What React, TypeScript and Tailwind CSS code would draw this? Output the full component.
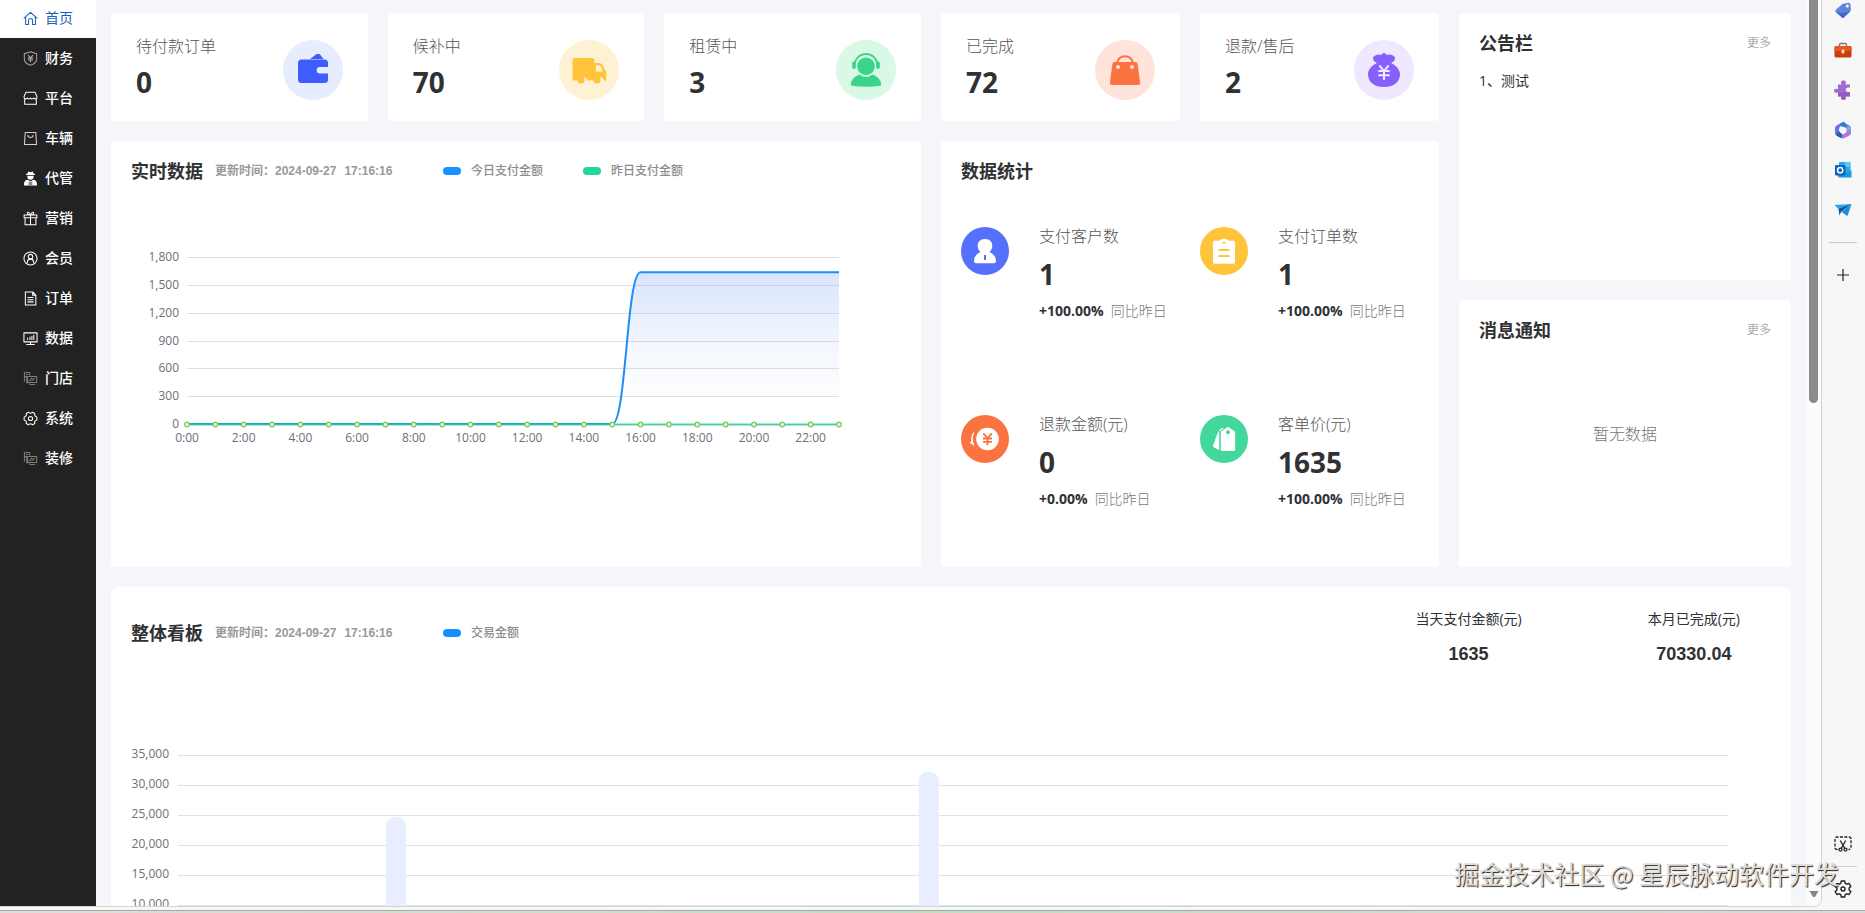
import { ReactElement, ReactNode } from "react";

const stroke = {
  fill: "none",
  stroke: "currentColor",
  strokeWidth: 1.1,
  strokeLinecap: "round" as const,
  strokeLinejoin: "round" as const,
};

/* Menu icons, all on a 16 x 16 grid */
const menuIcons: Record<string, ReactNode> = {
  home: <path d="M1.2 7.6 8 1.4l6.8 6.2M2.8 6.4v8.1h3.1V10a2.1 2.1 0 0 1 4.2 0v4.5h3.1V6.4" />,
  shield: <path d="M8 .9 14.6 3v5.2c0 3.3-2.6 5.6-6.6 7-4-1.4-6.6-3.7-6.6-7V3ZM5.6 4.6 8 7.4l2.4-2.8M8 7.4v4.4M5.6 7.6h4.8M5.6 9.6h4.8" />,
  shop: <path d="M3.200 1.300h9.600l2 4.200v1.600c-.4 1.600-2.600 1.700-3.400.4-.8 1.300-2.700 1.300-3.400 0-.8 1.300-2.700 1.300-3.400 0C3.800 8.800 1.600 8.700 1.200 7.100V5.500ZM1.800 8.400v5.800h12.400V8.400" />,
  bag: <path d="M2.4 1.500h11.200l.9 13H1.500ZM5.200 4.500c.3 3.200 5.300 3.200 5.600 0" />,
  gift: <path d="M1.200 4.300h13.600v3H1.200ZM2.200 7.300h11.600v7.400H2.200ZM8 4.300v10.400M8 4.300C6.500 4.300 4.300 3.500 4.600 2S7.200 1.300 8 4.300c.8-3 3.100-3.800 3.400-2.300S9.500 4.300 8 4.300" />,
  user: (
    <>
      <circle cx="8" cy="8" r="7" />
      <circle cx="8" cy="6" r="2.4" />
      <path d="M4.500 12.800c.2-5.500 6.800-5.500 7 0" />
    </>
  ),
  order: <path d="M2.500 1h7.800l3.400 3.400V15H2.500ZM10.300 1v3.400h3.400M5.200 7h5.600M5.200 9.300h5.600M5.200 11.600h5.600" />,
  data: <path d="M1 2h14v9.600H1ZM4 14.300h8M8 11.600v2.700M5 9V7.600M7.500 9V6.400M9.500 9V5.500M11.500 9V4.600" />,
  store: <path d="M1.500 10.800V1.500h5.800v3M3.300 3.700h2M1.500 6h2.500v6.400h3M4.800 5.800h9.800v6.400H4.800ZM7.300 14.300h5M6.500 10.500l3-3M9.300 10.600l3-3" />,
  gear: (
    <>
      <path d="M5.800 1.300 8 2.500l2.200-1.200 2.300 1.300.1 2.500 2.200 1.400v3l-2.200 1.400-.1 2.500-2.300 1.300L8 13.500l-2.200 1.200-2.300-1.300-.1-2.500-2.200-1.400v-3l2.200-1.400.1-2.500Z" />
      <circle cx="8" cy="8" r="2.2" />
    </>
  ),
  agent: (
    <g fill="currentColor" stroke="none">
      <path d="M4.800 2.600 5.600.5 8 1.200 10.400.5l.8 2.100 1.600.6v1H3.200v-1Z" />
      <path d="M4.700 5h6.600v1.200a3.300 3.200 0 0 1-6.600 0Z" />
      <path d="M1 15.500c0-4 1-5.600 3.800-6.100L8 10.800l3.200-1.400c2.800.5 3.800 2.100 3.800 6.100Z" />
      <path d="M6 11.300h4v4.200H6Z" fill="#8a8a8a" />
    </g>
  ),
};

const menu = [
  { label: "财务", icon: "shield", tone: "text-[#a8a8a8]" },
  { label: "平台", icon: "shop", tone: "text-white" },
  { label: "车辆", icon: "bag", tone: "text-[#d0d0d0]" },
  { label: "代管", icon: "agent", tone: "text-white" },
  { label: "营销", icon: "gift", tone: "text-white" },
  { label: "会员", icon: "user", tone: "text-white" },
  { label: "订单", icon: "order", tone: "text-white" },
  { label: "数据", icon: "data", tone: "text-white" },
  { label: "门店", icon: "store", tone: "text-[#7d7d7d]" },
  { label: "系统", icon: "gear", tone: "text-white" },
  { label: "装修", icon: "store", tone: "text-[#7d7d7d]" },
];

function MenuIcon({ name, tone }: { name: string; tone: string }): ReactElement {
  return (
    <svg viewBox="0 0 16 16" className={`size-[15px] ${tone}`} {...stroke}>
      {menuIcons[name]}
    </svg>
  );
}

function SideMenu(): ReactElement {
  return (
    <nav className="w-24 shrink-0 bg-[#222222] text-sm text-white">
      <a href="#home" className="flex h-[38px] items-center gap-[7px] bg-white pb-0.5 pl-[23px] text-[#1a5fc0]">
        <MenuIcon name="home" tone="text-[#1a5fc0]" />
        首页
      </a>
      {menu.map((item) => (
        <a key={item.label} href="#menu" className="flex h-10 items-center gap-[7px] pl-[23px] font-medium">
          <MenuIcon name={item.icon} tone={item.tone} />
          {item.label}
        </a>
      ))}
    </nav>
  );
}

/* Round order icons, 60 x 60 */
const walletIcon = (
  <svg viewBox="0 0 60 60" className="size-[60px]">
    <circle cx="30" cy="30" r="30" fill="#e6edff" />
    <path d="M27 19l6-4.500q2-1.300 4 0L40.500 19Z" fill="#3f5dfd" />
    <path d="M18.500 19.500h23a3.500 3.500 0 0 1 3.500 3.500v4h-8a3.300 3.300 0 0 0 0 6.600h8v6a3.500 3.500 0 0 1-3.500 3.500h-23a3.500 3.500 0 0 1-3.500-3.500V23a3.500 3.500 0 0 1 3.500-3.500Z" fill="#3f5dfd" />
  </svg>
);
const truckIcon = (
  <svg viewBox="0 0 60 60" className="size-[60px]">
    <circle cx="30" cy="30" r="30" fill="#fff1d3" />
    <path d="M16 18h17a2.500 2.500 0 0 1 2.500 2.500V23h4.800q2 0 3 1.700l3.200 6.300.8.8v8q0 .7-.7.700h-1.500a5 5 0 0 0-9.500 0h-6.800a5 5 0 0 0-9.600 0H14.500q-1 0-1-1V20.500A2.500 2.500 0 0 1 16 18Z" fill="#ffc43a" />
    <path d="M36.800 25.300h3.200q1 0 1.500 1l2.500 5.200h-7.200Z" fill="#fff1d3" />
    <circle cx="22" cy="40" r="3.600" fill="#ffc43a" />
    <circle cx="38" cy="40" r="3.600" fill="#ffc43a" />
  </svg>
);
const serviceIcon = (
  <svg viewBox="0 0 60 60" className="size-[60px]">
    <circle cx="30" cy="30" r="30" fill="#d9f8e6" />
    <path d="M18.500 25.500a11.500 11.500 0 0 1 23 0" fill="none" stroke="#39d588" strokeWidth="1.800" />
    <rect x="16.200" y="21.500" width="3.600" height="7.500" rx="1.800" fill="#39d588" />
    <rect x="40.200" y="21.500" width="3.600" height="7.500" rx="1.800" fill="#39d588" />
    <circle cx="30" cy="26.300" r="8.800" fill="#39d588" />
    <path d="M23.500 34.500q6.500 5 13 0c5 2 8.500 5.500 8.700 10q0 1-1.200 1.300-14 2-28 0-1.200-.3-1.200-1.300c.2-4.500 3.700-8 8.700-10Z" fill="#39d588" />
  </svg>
);
const bagIcon = (
  <svg viewBox="0 0 60 60" className="size-[60px]">
    <circle cx="30" cy="30" r="30" fill="#ffe4db" />
    <path d="M22 24c.5-10.500 15.500-10.500 16 0" fill="none" stroke="#fb7340" strokeWidth="2" />
    <path d="M19.500 22h21q1.800 0 2.100 1.800l2.500 19q.2 2.200-1.900 2.200H16.800q-2.100 0-1.900-2.200l2.500-19q.3-1.800 2.100-1.800Z" fill="#fb7340" />
    <circle cx="23" cy="27" r="2" fill="#ffe4db" />
    <circle cx="37" cy="27" r="2" fill="#ffe4db" />
  </svg>
);
const moneyIcon = (
  <svg viewBox="0 0 60 60" className="size-[60px]">
    <circle cx="30" cy="30" r="30" fill="#efe8ff" />
    <path d="M22.500 15q2.800-1 4.500 0 3-3.800 6 0 2-1 4.700 0 3.600 1 3.300 4-.3 2.400-2.700 3l-1 1.300C43 26 46 30 46 34.500 46 42.500 39 47 30 47s-16-4.500-16-12.500c0-4.500 3-8.500 8.700-11.200l-1-1.300q-2.400-.6-2.700-3-.3-3 3.500-4Z" fill="#8660fb" />
    <path d="m25.300 25.500 4.700 5.300 4.700-5.300M30 30.800V40M24.300 31h11.400M24.300 35.300h11.400" fill="none" stroke="#efe8ff" strokeWidth="2" />
  </svg>
);

function OrderCard({ label, value, icon }: { label: string; value: string; icon: ReactNode }): ReactElement {
  return (
    <section className="flex h-[108px] min-w-0 flex-1 items-center justify-between rounded-sm bg-white px-[25px] pt-1.5">
      <div className="pb-1.5">
        <p className="text-base leading-6 font-light text-[#555]">{label}</p>
        <p className="mt-1.5 text-[28px] leading-9 font-bold text-[#303133]">{value}</p>
      </div>
      {icon}
    </section>
  );
}

function PanelTitle({ children }: { children: ReactNode }): ReactElement {
  return <h2 className="text-lg leading-5 font-bold text-[#303133]">{children}</h2>;
}

function UpdateTime(): ReactElement {
  return (
    <p className="ml-3 w-[228px] font-['Liberation_Sans','Noto_Sans_CJK_SC',sans-serif] text-xs leading-5 font-bold text-[#999]">
      更新时间：2024-09-27<span className="ml-2">17:16:16</span>
    </p>
  );
}

function Legend({ color, label }: { color: string; label: string }): ReactElement {
  return (
    <span className="mr-10 flex items-center gap-2.5 text-xs leading-5 font-medium text-[#8c8c8c]">
      <i className={`h-2 w-[18px] rounded-full ${color}`} />
      {label}
    </span>
  );
}

function RealtimeChart(): ReactElement {
  const left = 56;
  const right = 708;
  const bottom = 223;
  const step = (right - left) / 23;
  const ticks = [0, 300, 600, 900, 1200, 1500, 1800];
  const hours = Array.from({ length: 24 }, (_, i) => i);
  const y = (v: number) => bottom - (v / 1800) * 167;
  const rise = left + step * 15;
  const top = y(1635);
  const line = `M${left} ${bottom}H${rise}C${rise + step / 2} ${bottom} ${rise + step / 2} ${top} ${rise + step} ${top}H${right}`;
  return (
    <svg viewBox="0 0 770 260" className="mt-5 w-full" fontSize="12" fill="#6e7079">
      <defs>
        <linearGradient id="pay" x1="0" y1="0" x2="0" y2="1">
          <stop offset="0" stopColor="#d9e5fd" />
          <stop offset="0.5" stopColor="#f4f7fe" />
          <stop offset="0.85" stopColor="#ffffff" />
        </linearGradient>
      </defs>
      <path d={`${line}V${bottom}Z`} fill="url(#pay)" />
      {ticks.map((v) => (
        <g key={v}>
          <line x1={left} x2={right} y1={Math.round(y(v)) + 0.5} y2={Math.round(y(v)) + 0.5} stroke="#a9b0bc" strokeOpacity="0.4" />
          <text x={left - 8} y={y(v) + 4} textAnchor="end">
            {v.toLocaleString("en-US")}
          </text>
        </g>
      ))}
      <path d={line} fill="none" stroke="#1e8ef5" strokeWidth="2" />
      <path d={`M${left} ${bottom + 0.5}H${right}`} stroke="#22cf8c" strokeOpacity="0.8" strokeWidth="2" />
      {hours.map((h) => (
        <circle key={h} cx={left + step * h} cy={bottom + 0.5} r="2.2" fill="#fff" stroke="#7fc95f" strokeWidth="1.4" />
      ))}
      {hours
        .filter((h) => h % 2 === 0)
        .map((h) => (
          <text key={h} x={left + step * h} y={241} textAnchor="middle">
            {h}:00
          </text>
        ))}
    </svg>
  );
}

function BoardChart(): ReactElement {
  const left = 47;
  const right = 1597;
  const bottom = 263;
  const slot = (right - left) / 32;
  const ticks = [0, 5000, 10000, 15000, 20000, 25000, 30000, 35000];
  const bars = [
    { day: 4, amount: 24700 },
    { day: 15, amount: 32200 },
  ];
  return (
    <svg viewBox="0 0 1640 300" className="mt-9 w-full" fontSize="12" fill="#6e7079">
      {ticks.map((v) => (
        <g key={v}>
          <line x1={left} x2={right} y1={bottom - v * 0.006 + 0.5} y2={bottom - v * 0.006 + 0.5} stroke="#e0e2e6" />
          <text x={left - 9} y={bottom - v * 0.006 + 3} textAnchor="end">
            {v.toLocaleString("en-US")}
          </text>
        </g>
      ))}
      {bars.map((b) => (
        <rect key={b.day} x={left + slot * (b.day + 0.5) - 10} y={bottom - b.amount * 0.006} width="20" height={b.amount * 0.006} rx="9" fill="#e8eeff" />
      ))}
    </svg>
  );
}

/* Round statistic icons, 48 x 48 */
const customerIcon = (
  <svg viewBox="0 0 48 48" className="size-12 shrink-0">
    <circle cx="24" cy="24" r="24" fill="#5570fd" />
    <path d="M24 12c5 0 7.300 3 7.300 6.800 0 2.800-1.300 5-2.900 6.300 4 1.800 6.600 4.500 6.600 9.200q0 1.900-2 1.900H15q-2 0-2-1.900c0-4.700 2.600-7.400 6.600-9.200-1.600-1.300-2.900-3.500-2.900-6.300C16.700 15 19 12 24 12Z" fill="#fff" />
    <path d="M23 28h2v5h-2Z" fill="#5570fd" />
  </svg>
);
const payOrderIcon = (
  <svg viewBox="0 0 48 48" className="size-12 shrink-0">
    <circle cx="24" cy="24" r="24" fill="#ffc43a" />
    <path d="M14.500 13.800H19q2-2 5-2t5 2h4.500q1.500 0 1.500 1.500v20q0 1.500-1.500 1.500h-19q-1.500 0-1.500-1.500v-20q0-1.500 1.500-1.500Z" fill="#fff" />
    <circle cx="24" cy="15.500" r="1.300" fill="#ffc43a" />
    <path d="M18.500 23h11M18.500 29h11" stroke="#ffc43a" strokeWidth="2" />
  </svg>
);
const refundIcon = (
  <svg viewBox="0 0 48 48" className="size-12 shrink-0">
    <circle cx="24" cy="24" r="24" fill="#fb7340" />
    <circle cx="26.500" cy="24" r="11.300" fill="#fff" />
    <path d="M13.300 17.500q-3.300 6 .2 13.500l-5.300-3.500 2-.5q-.5-5.500 2-9.500Z" fill="#fff" />
    <path d="m22.300 18.300 4.200 5 4.200-5M26.500 23.300v7M22 23.500h9M22 26.800h9" fill="none" stroke="#fb7340" strokeWidth="1.800" />
  </svg>
);
const priceIcon = (
  <svg viewBox="0 0 48 48" className="size-12 shrink-0">
    <circle cx="24" cy="24" r="24" fill="#43d79b" />
    <path d="M20.800 13.500 24 12.800l-4.800 4V35l-5.700-2.800q-.8-.5-.5-1.400l4.300-12Z" fill="#fff" />
    <path d="m28 11.800 6.300 4.200q.9.700.9 1.800v16.700q0 1.500-1.500 1.500H22.300q-1.500 0-1.500-1.500V17.800q0-1.100.9-1.800Z" fill="#fff" />
    <circle cx="28" cy="17.300" r="2" fill="#43d79b" />
  </svg>
);

const stats = [
  { label: "支付客户数", value: "1", rate: "+100.00%", icon: customerIcon },
  { label: "支付订单数", value: "1", rate: "+100.00%", icon: payOrderIcon },
  { label: "退款金额(元)", value: "0", rate: "+0.00%", icon: refundIcon },
  { label: "客单价(元)", value: "1635", rate: "+100.00%", icon: priceIcon },
];

function StatPanel(): ReactElement {
  return (
    <section className="flex-1 rounded-sm bg-white pt-5 pl-5">
      <PanelTitle>数据统计</PanelTitle>
      <div className="mt-[43px] grid grid-cols-2 gap-y-[89px]">
        {stats.map((s) => (
          <div key={s.label} className="flex gap-[30px]">
            <div className="pt-[3px]">{s.icon}</div>
            <div>
              <p className="text-base leading-6 font-light text-[#555]">{s.label}</p>
              <p className="mt-2 text-[28px] leading-9 font-bold text-[#303133]">{s.value}</p>
              <p className="mt-[7px] flex gap-[7px] text-sm leading-6 whitespace-nowrap">
                <b className="text-[#303133]">{s.rate}</b>
                <span className="font-light text-[#777]">同比昨日</span>
              </p>
            </div>
          </div>
        ))}
      </div>
    </section>
  );
}

function NoticePanel({ title, children }: { title: string; children: ReactNode }): ReactElement {
  return (
    <section className="flex min-h-[267px] flex-1 flex-col rounded-sm bg-white p-5">
      <div className="flex items-center justify-between">
        <PanelTitle>{title}</PanelTitle>
        <a href="#more" className="text-xs leading-5 font-light text-[#888]">更多</a>
      </div>
      {children}
    </section>
  );
}

function BoardTotal({ label, value }: { label: string; value: string }): ReactElement {
  return (
    <div className="text-center text-[#303133]">
      <p className="text-sm leading-6">{label}</p>
      <p className="mt-[11px] font-['Liberation_Sans',sans-serif] text-lg leading-6 font-bold">{value}</p>
    </div>
  );
}

/* Browser side bar */
function BrowserBar(): ReactElement {
  return (
    <aside className="flex w-[43px] shrink-0 flex-col items-center pr-px">
      <div className="flex flex-col gap-5">
        <button type="button" aria-label="购物" className="size-5">
          <svg viewBox="0 0 20 20">
            <path d="m9.500 4 5.800-1.300q2-.2 2.200 1.700l.3 5.600q0 1-.7 1.600L11 17.300q-1.200 1-2.300 0L2.800 12q-1.100-1.100 0-2.300Z" fill="#5b86dc" />
            <path d="m2.800 12 5.900 5.300q1.100 1 2.300 0l6.100-5.700L9 13Z" fill="#4168c4" />
            <circle cx="14.300" cy="6" r="1.500" fill="#fff" />
          </svg>
        </button>
        <button type="button" aria-label="工具" className="size-5">
          <svg viewBox="0 0 20 20">
            <path d="M6.500 7V4.800q0-1.300 1.300-1.300h4.400q1.300 0 1.300 1.300V7" fill="none" stroke="#777" strokeWidth="1.300" />
            <rect x="1.500" y="6" width="17" height="11.500" rx="1.500" fill="#c93c0c" />
            <path d="M3 6h14q1.500 0 1.500 1.500V11h-17V7.500Q1.500 6 3 6Z" fill="#e4591f" />
            <rect x="8.500" y="9.500" width="3" height="4" rx="1" fill="#ffd9b8" />
          </svg>
        </button>
        <button type="button" aria-label="游戏" className="size-5">
          <svg viewBox="0 0 20 20">
            <path d="M5 4.500h3.700q-1.200-1.400-.7-2.700.8-1.600 2.500-1.600t2.300 1.600q.5 1.300-.6 2.700H17v3.300q-3-1-4 1-.6 1.600.5 2.700 1.300 1 3.500.2v4.800h-4.800q1.100 1.200.6 2.300-.6 1-2.300 1T8 18.800q-.4-1.200.7-2.300H5v-4.200q-3.200 1.500-4-1.300-.2-3.200 4-2Z" fill="#a06bd0" />
            <path d="M5 12.300 16.500 12.500 17 16.500h-4.800q1.100 1.200.6 2.300-.6 1-2.300 1T8 18.800q-.4-1.200.7-2.300H5Z" fill="#8453b8" opacity=".6" />
          </svg>
        </button>
        <button type="button" aria-label="Microsoft 365" className="size-5">
          <svg viewBox="0 0 20 20">
            <path d="M10 2 3.500 5.500Q2 6.500 2 8v5q0 1.800 1.500 2.600L6 17V9.500Q6 7 8 6l4-3.500Q11 1.500 10 2Z" fill="#6a72dc" />
            <path d="m10 2 6.500 3.700Q18 6.500 18 8.300V11l-5-2.800L8 6l-1-2.300Z" fill="#2f7cd0" />
            <path d="M18 8v5q0 1.700-1.500 2.500L11 18.300q-1 .5-2 0L3.500 15.500l7-1.500q3-1 3-4.500V5Z" fill="#b278d8" />
            <path d="M16 5.500q2 1 2 3V11l-4-2.500Z" fill="#4fc3ea" />
            <path d="M3 15 6 17l3 1.300V14l-3-3Z" fill="#2860b5" />
            <circle cx="10.200" cy="10.200" r="3.300" fill="#f7f7f7" />
          </svg>
        </button>
        <button type="button" aria-label="Outlook" className="size-5">
          <svg viewBox="0 0 20 20">
            <rect x="6" y="2" width="11.500" height="13" rx="1" fill="#2ba8ea" />
            <path d="M12 2h5.500v5H12Z" fill="#50d0f5" />
            <path d="m5 11 7 3 6.500-4v7.500H6.500Q5 17.500 5 16Z" fill="#169ae0" />
            <rect x="2" y="5" width="10.500" height="10.500" rx="1.200" fill="#0f64b8" />
            <circle cx="7.200" cy="10.200" r="2.600" fill="none" stroke="#fff" strokeWidth="1.500" />
          </svg>
        </button>
        <button type="button" aria-label="Drop" className="size-5">
          <svg viewBox="0 0 20 20">
            <path d="M1.500 5 18.500 4 6.500 10Z" fill="#2aa5ea" />
            <path d="M5.500 9 18.500 4 8 12l-1.500 3.500Z" fill="#0c5796" />
            <path d="M18.500 4 8.500 12l6 4Z" fill="#1c8ddc" />
          </svg>
        </button>
      </div>
      <hr className="mt-[22px] w-7 border-[#c8c8c8]" />
      <button type="button" aria-label="添加" className="mt-[22px] size-5">
        <svg viewBox="0 0 20 20" fill="none" stroke="#222" strokeWidth="1.200">
          <path d="M4 10h12M10 4v12" />
        </svg>
      </button>
      <button type="button" aria-label="截图" className="mt-auto size-5">
        <svg viewBox="0 0 20 20" fill="none" stroke="#222" strokeWidth="1.300">
          <path d="M4.500 15.500H4a2 2 0 0 1-2-2V5a2 2 0 0 1 2-2h12a2 2 0 0 1 2 2v8.500a2 2 0 0 1-2 2h-.5" strokeDasharray="3 1.400" />
          <path d="m7.300 6.500 4.500 8M12.700 6.500l-4.500 8" />
          <circle cx="7.500" cy="15.600" r="1.500" />
          <circle cx="12.500" cy="15.600" r="1.500" />
        </svg>
      </button>
      <hr className="mt-3 w-7 border-[#d0d0d0]" />
      <button type="button" aria-label="设置" className="mt-3 mb-[11px] size-5">
        <svg viewBox="0 0 20 20" fill="none" stroke="#222" strokeWidth="1.400" strokeLinejoin="round">
          <path d="M8.300 2h3.400l.5 2.300 1.600.9 2.300-.7 1.700 2.900-1.700 1.700v1.800l1.700 1.700-1.700 2.900-2.300-.7-1.600.9-.5 2.300H8.300l-.5-2.300-1.600-.9-2.300.7-1.700-2.900 1.700-1.700V9.100L2.200 7.400l1.700-2.900 2.300.7 1.600-.9Z" />
          <circle cx="10" cy="10" r="2" />
        </svg>
      </button>
    </aside>
  );
}

export default function App(): ReactElement {
  return (
    <div className="relative flex h-screen flex-col overflow-hidden bg-[#f7f7f7] font-['Open_Sans','Noto_Sans_CJK_SC',sans-serif] text-[#303133]">
      <div className="flex min-h-0 flex-1">
        <div className="mb-[3px] flex min-w-0 flex-1 overflow-hidden rounded-br-lg border-r border-b border-[#d4d4d4]">
          <SideMenu />
          <main className="min-w-0 flex-1 overflow-hidden bg-[#f4f6fa] px-[15px] pt-[13px]">
            <div className="grid grid-cols-[810fr_498fr_332fr] gap-5">
              {/* Orders and realtime data */}
              <div className="flex min-w-0 flex-col gap-5">
                <div className="flex gap-5">
                  <OrderCard label="待付款订单" value="0" icon={walletIcon} />
                  <OrderCard label="候补中" value="70" icon={truckIcon} />
                  <OrderCard label="租赁中" value="3" icon={serviceIcon} />
                </div>
                <section className="flex-1 rounded-sm bg-white p-5">
                  <div className="flex items-center">
                    <PanelTitle>实时数据</PanelTitle>
                    <UpdateTime />
                    <Legend color="bg-[#1890ff]" label="今日支付金额" />
                    <Legend color="bg-[#25d695]" label="昨日支付金额" />
                  </div>
                  <RealtimeChart />
                </section>
              </div>
              {/* Finished orders and statistics */}
              <div className="flex min-w-0 flex-col gap-5">
                <div className="flex gap-5">
                  <OrderCard label="已完成" value="72" icon={bagIcon} />
                  <OrderCard label="退款/售后" value="2" icon={moneyIcon} />
                </div>
                <StatPanel />
              </div>
              {/* Notices */}
              <div className="flex min-w-0 flex-col gap-5">
                <NoticePanel title="公告栏">
                  <p className="mt-[18px] text-sm leading-5">1、测试</p>
                </NoticePanel>
                <NoticePanel title="消息通知">
                  <p className="flex flex-1 items-center justify-center pb-5 font-light text-[#777]">暂无数据</p>
                </NoticePanel>
              </div>
            </div>
            {/* Board */}
            <section className="mt-5 rounded-lg bg-white p-5">
              <div className="flex">
                <div className="flex flex-1 items-start pt-4">
                  <PanelTitle>整体看板</PanelTitle>
                  <UpdateTime />
                  <Legend color="bg-[#1890ff]" label="交易金额" />
                </div>
                <div className="flex gap-[126px] pr-[31px]">
                  <BoardTotal label="当天支付金额(元)" value="1635" />
                  <BoardTotal label="本月已完成(元)" value="70330.04" />
                </div>
              </div>
              <BoardChart />
            </section>
          </main>
          {/* Scroll track */}
          <div className="flex w-[15px] shrink-0 flex-col items-center justify-between bg-[#fcfcfc] pb-2">
            <div className="h-[403px] w-[9px] rounded-b-full bg-[#8b8b8b]" />
            <svg viewBox="0 0 10 8" className="w-2.5" fill="#858585">
              <path d="M.5 1h9L6 7H4Z" />
            </svg>
          </div>
        </div>
        <BrowserBar />
      </div>
      <div className="h-[3px] shrink-0 border-t border-[#a3aba3] bg-linear-to-r from-[#deded9] via-[#bfe0c4] to-[#d9dad6]" />
      {/* Watermark */}
      <p className="absolute right-[26px] bottom-[22px] font-['Noto_Sans_CJK_SC',sans-serif] text-[25px] leading-9 text-[#dcdcdc] [text-shadow:1px_1px_1px_#222]">
        掘金技术社区 @ 星辰脉动软件开发
      </p>
    </div>
  );
}
